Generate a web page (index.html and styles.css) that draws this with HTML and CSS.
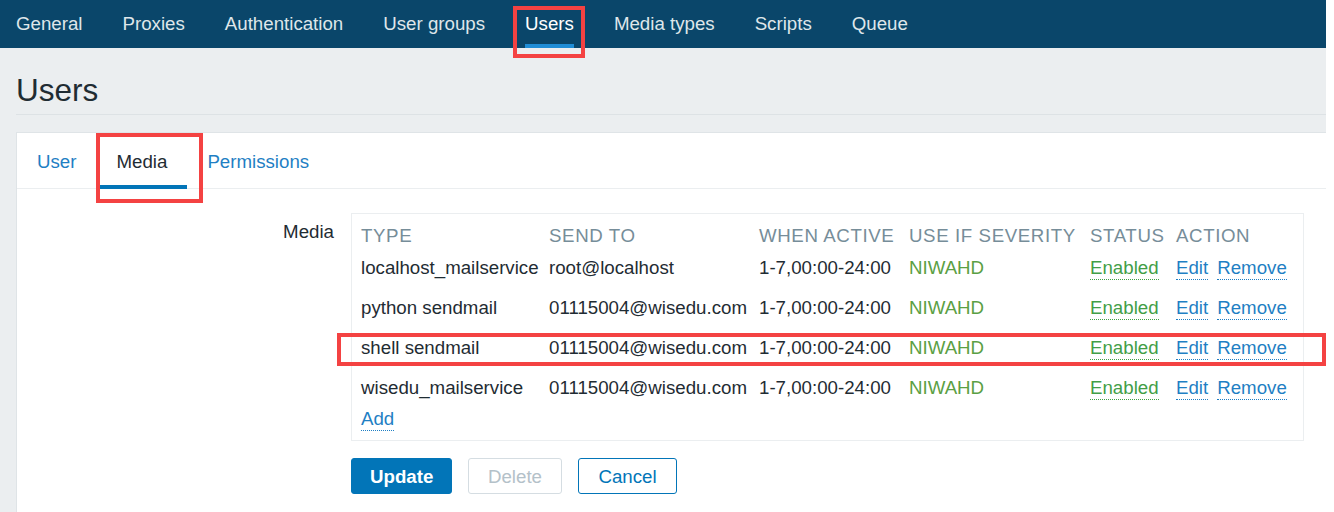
FILE: index.html
```html
<!DOCTYPE html>
<html lang="en">
<head>
<meta charset="utf-8">
<title>Users</title>
<link rel="stylesheet" href="styles.css">
</head>
<body>
<div class="page">
  <nav class="topnav">
    <a class="nav-item" href="#">General</a>
    <a class="nav-item" href="#">Proxies</a>
    <a class="nav-item" href="#">Authentication</a>
    <a class="nav-item" href="#">User groups</a>
    <a class="nav-item is-active" href="#">Users</a>
    <a class="nav-item" href="#">Media types</a>
    <a class="nav-item" href="#">Scripts</a>
    <a class="nav-item" href="#">Queue</a>
  </nav>

  <main class="content">
    <header class="page-header">
      <h1 class="page-title">Users</h1>
    </header>

    <section class="panel">
      <div class="tabs">
        <a class="tab" href="#">User</a>
        <a class="tab is-active" href="#">Media</a>
        <a class="tab" href="#">Permissions</a>
      </div>

      <div class="form">
        <div class="form-row">
          <label class="form-label">Media</label>
          <div class="media-box">
            <table class="media-table">
              <thead>
                <tr>
                  <th class="col-type">Type</th>
                  <th class="col-send">Send to</th>
                  <th class="col-when">When active</th>
                  <th class="col-sev">Use if severity</th>
                  <th class="col-status">Status</th>
                  <th class="col-action">Action</th>
                </tr>
              </thead>
              <tbody>
                <tr>
                  <td>localhost_mailservice</td>
                  <td>root@localhost</td>
                  <td>1-7,00:00-24:00</td>
                  <td class="sev">NIWAHD</td>
                  <td><a class="link-green" href="#">Enabled</a></td>
                  <td><a class="link" href="#">Edit</a><a class="link link-gap" href="#">Remove</a></td>
                </tr>
                <tr>
                  <td>python sendmail</td>
                  <td>01115004@wisedu.com</td>
                  <td>1-7,00:00-24:00</td>
                  <td class="sev">NIWAHD</td>
                  <td><a class="link-green" href="#">Enabled</a></td>
                  <td><a class="link" href="#">Edit</a><a class="link link-gap" href="#">Remove</a></td>
                </tr>
                <tr>
                  <td>shell sendmail</td>
                  <td>01115004@wisedu.com</td>
                  <td>1-7,00:00-24:00</td>
                  <td class="sev">NIWAHD</td>
                  <td><a class="link-green" href="#">Enabled</a></td>
                  <td><a class="link" href="#">Edit</a><a class="link link-gap" href="#">Remove</a></td>
                </tr>
                <tr>
                  <td>wisedu_mailservice</td>
                  <td>01115004@wisedu.com</td>
                  <td>1-7,00:00-24:00</td>
                  <td class="sev">NIWAHD</td>
                  <td><a class="link-green" href="#">Enabled</a></td>
                  <td><a class="link" href="#">Edit</a><a class="link link-gap" href="#">Remove</a></td>
                </tr>
                <tr class="add-row">
                  <td colspan="6"><a class="link" href="#">Add</a></td>
                </tr>
              </tbody>
            </table>
          </div>
        </div>

        <div class="form-actions">
          <button class="btn btn-primary" type="button">Update</button>
          <button class="btn btn-disabled" type="button" disabled>Delete</button>
          <button class="btn btn-alt" type="button">Cancel</button>
        </div>
      </div>
    </section>
  </main>

  <div class="mark mark-nav"></div>
  <div class="mark mark-tab"></div>
  <div class="mark mark-row"></div>
</div>
</body>
</html>
```

FILE: styles.css
```css
html, body {
  margin: 0;
  padding: 0;
  background: #ffffff;
}

body {
  font-family: "Liberation Sans", Arial, sans-serif;
  font-size: 18.7px;
  color: #1f2c33;
  overflow: hidden;
}

a { text-decoration: none; }

.page {
  position: relative;
  width: 1326px;
  height: 512px;
  background: #ebeef0;
  overflow: hidden;
}

/* top navigation */
.topnav {
  display: flex;
  gap: 40px;
  height: 48px;
  padding-left: 16px;
  background: #0a466a;
}

.nav-item {
  display: block;
  box-sizing: border-box;
  height: 48px;
  padding-top: 13px;
  line-height: 21px;
  color: #dfe6ea;
  border-bottom: 4px solid transparent;
}

.nav-item.is-active {
  color: #ffffff;
  border-bottom-color: #1f8dd6;
}

/* header */
.content {
  padding-left: 16px;
}

.page-header {
  padding-top: 24px;
  padding-bottom: 6px;
  border-bottom: 1px solid #dde2e5;
}

.page-title {
  margin: 0;
  font-size: 31.5px;
  font-weight: normal;
  line-height: 36px;
  color: #1f2c33;
}

/* panel */
.panel {
  margin-top: 17px;
  background: #ffffff;
  border: 1px solid #dfe4e7;
  border-right: none;
  min-height: 420px;
}

.tabs {
  display: flex;
  border-bottom: 1px solid #ebeef0;
}

.tab {
  display: block;
  padding: 18px 20px 13px;
  line-height: 21px;
  margin-bottom: -1px;
  color: #1f7fc4;
  border-bottom: 4px solid transparent;
}

.tab.is-active {
  color: #1f2c33;
  border-bottom-color: #0275b8;
}

/* form */
.form {
  padding-top: 24px;
}

.form-row {
  display: grid;
  grid-template-columns: 317px 953px;
  column-gap: 17px;
  align-items: start;
}

.form-label {
  text-align: right;
  padding-top: 8px;
  line-height: 21px;
}

.media-box {
  box-sizing: border-box;
  border: 1px solid #ebeef0;
  padding: 0 9px;
}

.media-table {
  width: 100%;
  table-layout: fixed;
  border-collapse: collapse;
}

.media-table th,
.media-table td {
  padding: 0;
  text-align: left;
  white-space: nowrap;
  line-height: 21px;
  vertical-align: top;
}

.media-table th {
  font-weight: normal;
  text-transform: uppercase;
  letter-spacing: 0.6px;
  color: #768d99;
  padding: 11px 0 2px;
}

.media-table td {
  padding: 9px 0 10px;
}

.media-table .add-row td {
  padding: 0 0 11px;
}

.col-type { width: 188px; }
.col-send { width: 210px; }
.col-when { width: 150px; }
.col-sev { width: 181px; }
.col-status { width: 86px; }

.sev { color: #5ba043; }

.link,
.link-green {
  padding-bottom: 1px;
  border-bottom: 1px dotted;
}

.link { color: #1f7fc4; border-bottom-color: #1f7fc4; }
.link-green { color: #429e47; border-bottom-color: #429e47; }
.link-gap { margin-left: 9px; }

/* buttons */
.form-actions {
  display: flex;
  gap: 16px;
  padding-left: 334px;
  padding-top: 17px;
}

.btn {
  box-sizing: border-box;
  height: 36px;
  padding: 2px 18px 0;
  font-family: "Liberation Sans", Arial, sans-serif;
  font-size: 18.7px;
  border-radius: 3px;
  border: 1px solid;
  background: #ffffff;
}

.btn-primary {
  width: 101px;
  background: #0275b8;
  border-color: #0275b8;
  color: #ffffff;
  font-weight: bold;
}

.btn-disabled {
  width: 94px;
  border-color: #d5dde2;
  color: #b4c1c9;
}

.btn-alt {
  width: 99px;
  border-color: #0275b8;
  color: #0275b8;
}

/* red annotation boxes drawn over the screenshot */
.mark {
  position: absolute;
  box-sizing: border-box;
  border: 4px solid #f44242;
}

.mark-nav { left: 513px; top: 6px; width: 72px; height: 52px; }
.mark-tab { left: 96px; top: 133px; width: 107px; height: 70px; }
.mark-row { left: 337px; top: 333px; width: 989px; height: 33px; }
```
